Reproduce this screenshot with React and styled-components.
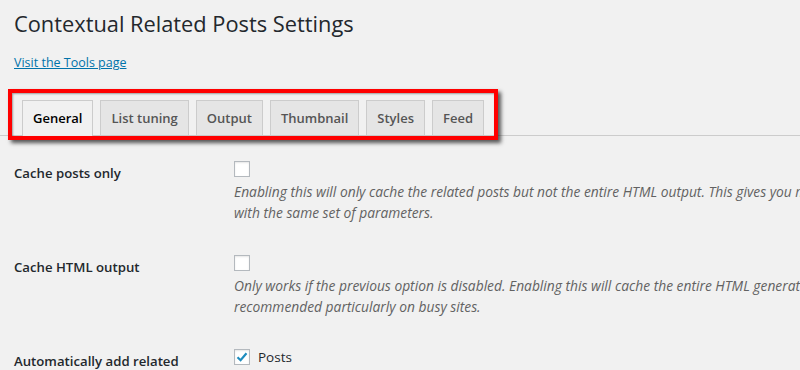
import React from "react";
import styled, { createGlobalStyle } from "styled-components";

const Global = createGlobalStyle`
  html, body { margin: 0; padding: 0; background: #f1f1f1; overflow: hidden; }
  body { font-family: "Open Sans", "Noto Sans", sans-serif; color: #23282d; }
`;

const Wrap = styled.div`
  width: 1200px;
  padding: 0 0 0 14px;
`;

const Title = styled.h1`
  margin: 0;
  padding: 9px 0 4px;
  font-size: 21.8px;
  font-weight: 400;
  line-height: 29px;
  color: #23282d;
`;

const ToolsLink = styled.a`
  display: inline-block;
  margin-top: 11px;
  font-size: 12.5px;
  line-height: 19px;
  color: #0073aa;
  text-decoration: underline;
`;

const TabArea = styled.div`
  position: relative;
  margin-top: 19px;
  margin-left: -14px;
  padding-left: 14px;
  border-bottom: 1px solid #ccc;
`;

const TabRow = styled.nav`
  display: flex;
  align-items: flex-end;
  gap: 7px;
  padding: 9px 0 0 8px;
`;

const Tab = styled.a`
  display: block;
  padding: 5px 10px;
  border: 1px solid #ccc;
  border-bottom: none;
  font-size: 13px;
  font-weight: 600;
  line-height: 24px;
  text-decoration: none;
  background: ${(p) => (p.$active ? "#f1f1f1" : "#e5e5e5")};
  color: ${(p) => (p.$active ? "#000" : "#555")};
  margin-bottom: ${(p) => (p.$active ? "-1px" : "0")};
  padding-bottom: ${(p) => (p.$active ? "6px" : "5px")};
`;

const Highlight = styled.div`
  position: absolute;
  left: 8px;
  top: -2px;
  width: 482px;
  height: 43px;
  border: 4px solid #f00;
  box-shadow: 3px 3px 4px rgba(0, 0, 0, 0.65), inset 1px 1px 2px rgba(0, 0, 0, 0.35);
  pointer-events: none;
`;

const Table = styled.div`
  margin-top: 10px;
`;

const Row = styled.div`
  display: grid;
  grid-template-columns: 210px 1fr;
`;

const Label = styled.div`
  padding: 18px 10px 20px 0;
  font-size: 13.2px;
  font-weight: 600;
  line-height: 18px;
  color: #23282d;
`;

const Field = styled.div`
  padding: 15px 10px 17px;
`;

const CheckLine = styled.label`
  display: flex;
  align-items: center;
  gap: 8px;
  font-size: 13.5px;
  line-height: 16px;
  color: #23282d;
`;

const Box = styled.span`
  width: 16px;
  height: 16px;
  box-sizing: border-box;
  border: 1px solid #b4b9be;
  background: #fff;
  box-shadow: inset 0 1px 2px rgba(0, 0, 0, 0.1);
  display: flex;
  align-items: center;
  justify-content: center;
`;

const Desc = styled.p`
  margin: 4px 0 0;
  font-size: 13.8px;
  font-style: italic;
  line-height: 21px;
  color: #626262;
  white-space: nowrap;
`;

const Check = () => (
  <svg width="14" height="14" viewBox="0 0 14 14">
    <path d="M2.5 7.2 L5.6 10.2 L11.5 3.2" fill="none" stroke="#1e8cbe" strokeWidth="2.2" />
  </svg>
);

const Checkbox = ({ checked }) => <Box>{checked && <Check />}</Box>;

const tabs = ["General", "List tuning", "Output", "Thumbnail", "Styles", "Feed"];

export default function App() {
  return (
    <>
      <Global />
      <Wrap>
        <Title>Contextual Related Posts Settings</Title>
        <ToolsLink href="#">Visit the Tools page</ToolsLink>
        <TabArea>
          <TabRow>
            {tabs.map((t, i) => (
              <Tab key={t} href="#" $active={i === 0}>
                {t}
              </Tab>
            ))}
          </TabRow>
          <Highlight />
        </TabArea>
        <Table>
          <Row>
            <Label>Cache posts only</Label>
            <Field>
              <CheckLine>
                <Checkbox />
              </CheckLine>
              <Desc>
                Enabling this will only cache the related posts but not the entire HTML output. This gives you more flexibility at marginal cost of performance
                <br />
                with the same set of parameters.
              </Desc>
            </Field>
          </Row>
          <Row>
            <Label>Cache HTML output</Label>
            <Field>
              <CheckLine>
                <Checkbox />
              </CheckLine>
              <Desc>
                Only works if the previous option is disabled. Enabling this will cache the entire HTML generated when the post is visited the first time. Highly
                <br />
                recommended particularly on busy sites.
              </Desc>
            </Field>
          </Row>
          <Row>
            <Label>Automatically add related</Label>
            <Field>
              <CheckLine>
                <Checkbox checked />
                Posts
              </CheckLine>
            </Field>
          </Row>
        </Table>
      </Wrap>
    </>
  );
}
